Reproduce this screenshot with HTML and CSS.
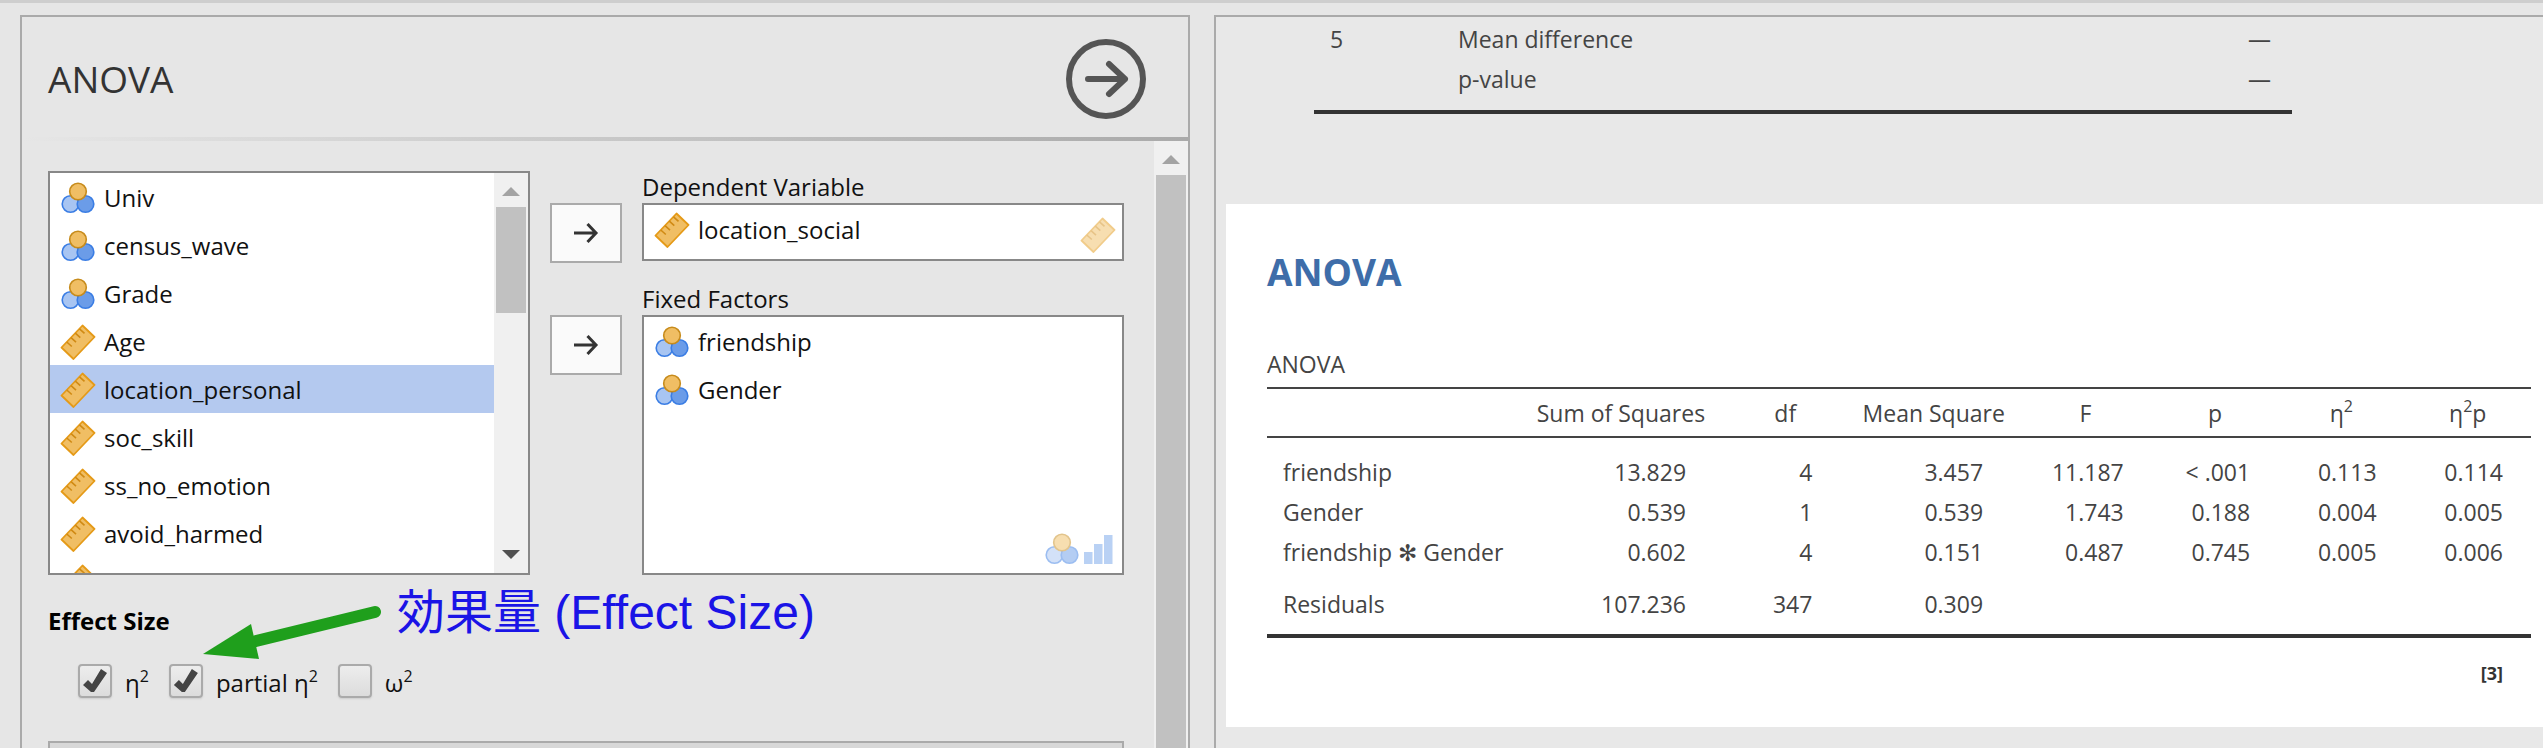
FILE: index.html
```html
<!DOCTYPE html>
<html lang="en">
<head>
<meta charset="utf-8">
<title>ANOVA</title>
<link rel="stylesheet" href="styles.css">
</head>
<body>
<svg class="defs" width="0" height="0" aria-hidden="true">
  <symbol id="nominal" viewBox="0 0 36 36">
    <circle cx="10.500" cy="24" r="8.300" fill="#a8c5f2" stroke="#3a7de4" stroke-width="1.600"/>
    <circle cx="25.500" cy="24" r="8.300" fill="#6b9ce8" stroke="#3a7de4" stroke-width="1.600"/>
    <circle cx="18" cy="11.500" r="8.300" fill="#f0be64" stroke="#c78b1b" stroke-width="1.600"/>
  </symbol>
  <symbol id="continuous" viewBox="0 0 36 36">
    <path d="M22.500 1.500 L34.500 13 L13.500 35 L1.500 23.500 Z" fill="#f0be64" stroke="#e59a17" stroke-width="1.800" stroke-linejoin="round"/>
    <path d="M19.500 4.800 l5 4.500 M15.300 9.200 l5 4.500 M11 13.600 l5 4.500 M6.800 18 l5 4.500" fill="none" stroke="#d08a14" stroke-width="1.600"/>
  </symbol>
  <symbol id="ordinal" viewBox="0 0 30 30">
    <path d="M0 18h8.500v12H0zM10 10h8.500v20H10zM20 1h8.500v29H20z" fill="#76a5ea"/>
  </symbol>
  <symbol id="arrow" viewBox="0 0 28 24">
    <path d="M2 12H24M15.500 3 L24 12 L15.500 21" fill="none" stroke="#333" stroke-width="3"/>
  </symbol>
</svg>
<main class="app">
  <section class="panel options">
    <header class="options-header">
      <h1 class="options-title">ANOVA</h1>
      <button class="close" type="button" aria-label="Close options">
        <svg viewBox="0 0 80 80" width="80" height="80"><circle cx="40" cy="40" r="37" fill="none" stroke="#555" stroke-width="6"/><path d="M22 40H59M43 25 L59 40 L43 55" fill="none" stroke="#555" stroke-width="6" stroke-linecap="round" stroke-linejoin="round"/></svg>
      </button>
    </header>
    <div class="rule"></div>
    <div class="options-body">
      <div class="options-content">
        <div class="variables">
          <div class="box supplier">
            <ul class="list" role="listbox" aria-label="Variables">
              <li class="item" role="option"><svg class="icon"><use href="#nominal"/></svg>Univ</li>
              <li class="item" role="option"><svg class="icon"><use href="#nominal"/></svg>census_wave</li>
              <li class="item" role="option"><svg class="icon"><use href="#nominal"/></svg>Grade</li>
              <li class="item" role="option"><svg class="icon"><use href="#continuous"/></svg>Age</li>
              <li class="item selected" role="option" aria-selected="true"><svg class="icon"><use href="#continuous"/></svg>location_personal</li>
              <li class="item" role="option"><svg class="icon"><use href="#continuous"/></svg>soc_skill</li>
              <li class="item" role="option"><svg class="icon"><use href="#continuous"/></svg>ss_no_emotion</li>
              <li class="item" role="option"><svg class="icon"><use href="#continuous"/></svg>avoid_harmed</li>
              <li class="item" role="option"><svg class="icon"><use href="#continuous"/></svg></li>
            </ul>
            <div class="scrollbar"><span class="up"></span><span class="thumb thumb-short"></span><span class="down"></span></div>
          </div>
          <div class="moves">
            <button class="move" type="button" aria-label="Move to Dependent Variable"><svg width="28" height="24"><use href="#arrow"/></svg></button>
            <button class="move" type="button" aria-label="Move to Fixed Factors"><svg width="28" height="24"><use href="#arrow"/></svg></button>
          </div>
          <div class="targets">
            <h2 class="label">Dependent Variable</h2>
            <div class="box target-single">
              <ul class="list"><li class="item"><svg class="icon"><use href="#continuous"/></svg>location_social</li></ul>
              <div class="permitted"><svg class="icon"><use href="#continuous"/></svg></div>
            </div>
            <h2 class="label label-next">Fixed Factors</h2>
            <div class="box target-multi">
              <ul class="list">
                <li class="item"><svg class="icon"><use href="#nominal"/></svg>friendship</li>
                <li class="item"><svg class="icon"><use href="#nominal"/></svg>Gender</li>
              </ul>
              <div class="permitted"><svg class="icon"><use href="#nominal"/></svg><svg class="icon-bars"><use href="#ordinal"/></svg></div>
            </div>
          </div>
        </div>
        <fieldset class="effect">
          <legend class="effect-title">Effect Size</legend>
          <div class="checks">
            <label class="check"><input type="checkbox" checked><span>η<sup>2</sup></span></label>
            <label class="check"><input type="checkbox" checked><span>partial η<sup>2</sup></span></label>
            <label class="check"><input type="checkbox"><span>ω<sup>2</sup></span></label>
          </div>
        </fieldset>
        <div class="collapse"></div>
      </div>
      <div class="scrollbar"><span class="up"></span><span class="thumb"></span></div>
    </div>
  </section>
  <section class="panel results">
    <table class="previous">
      <colgroup><col class="p-row"><col class="p-stat"><col></colgroup>
      <tbody>
        <tr><td>5</td><td>Mean difference</td><td class="num">—</td></tr>
        <tr><td></td><td>p-value</td><td class="num">—</td></tr>
      </tbody>
    </table>
    <article class="card">
      <h2 class="card-title">ANOVA</h2>
      <table class="anova">
        <caption>ANOVA</caption>
        <colgroup><col class="c-name"><col class="c-sum"><col class="c-std"><col class="c-mean"><col class="c-f"><col class="c-std"><col class="c-std"><col></colgroup>
        <thead>
          <tr><th></th><th>Sum of Squares</th><th>df</th><th>Mean Square</th><th>F</th><th>p</th><th>η<sup>2</sup></th><th>η<sup>2</sup>p</th></tr>
        </thead>
        <tbody>
          <tr class="first"><td>friendship</td><td>13.829</td><td>4</td><td>3.457</td><td>11.187</td><td>&lt;&nbsp;.001</td><td>0.113</td><td>0.114</td></tr>
          <tr><td>Gender</td><td>0.539</td><td>1</td><td>0.539</td><td>1.743</td><td>0.188</td><td>0.004</td><td>0.005</td></tr>
          <tr><td>friendship <span class="times">✻</span> Gender</td><td>0.602</td><td>4</td><td>0.151</td><td>0.487</td><td>0.745</td><td>0.005</td><td>0.006</td></tr>
          <tr class="last"><td>Residuals</td><td>107.236</td><td>347</td><td>0.309</td><td></td><td></td><td></td><td></td></tr>
        </tbody>
      </table>
      <p class="ref">[3]</p>
    </article>
  </section>
</main>
<div class="note">
  <svg class="note-arrow" viewBox="0 0 184 56" width="184" height="56" aria-hidden="true"><path d="M53 36 L172 7" stroke="#1f9f1c" stroke-width="12" stroke-linecap="round"/><path d="M0 49 L48 19 L56 54 Z" fill="#1f9f1c"/></svg>
  <span class="note-text">効果量 (Effect Size)</span>
</div>
</body>
</html>
```
FILE: styles.css
```css
* { box-sizing: border-box; }

html { height: 100%; overflow: hidden; }

body {
  margin: 0;
  height: 100%;
  overflow: hidden;
  background: #e6e6e6;
  color: #111;
  font: 24px/32px "Open Sans", "Noto Sans", "DejaVu Sans", sans-serif;
}

h1, h2, p, ul { margin: 0; padding: 0; font-weight: 400; }
sup { font-size: 16px; line-height: 0; vertical-align: 10px; }
.defs { position: absolute; }

.app {
  display: grid;
  grid-template-columns: 1170fr 1329fr;
  grid-template-rows: minmax(0, 1fr);
  gap: 24px;
  height: 100%;
  padding: 12px 0 0 20px;
  border-top: 3px solid #cecece;
}

.panel { border: 2px solid #aaa; border-bottom: 0; min-width: 0; overflow: hidden; }

/* Options */
.options { display: flex; flex-direction: column; }
.options-header {
  display: flex;
  align-items: center;
  justify-content: space-between;
  flex: none;
  height: 120px;
  padding: 4px 42px 0 26px;
}
.options-title { font-size: 37px; line-height: 48px; color: #333; }
.close { padding: 0; border: 0; background: none; height: 80px; }
.rule { flex: none; height: 4px; background: linear-gradient(to right, #e6e6e6, #aaa); }
.options-body { display: flex; flex: 1; min-height: 0; }
.options-content { display: flex; flex-direction: column; flex: 1; padding: 30px 30px 0 26px; }

.variables { display: grid; grid-template-columns: 1fr 72px 1fr; gap: 20px; flex: none; }
.box { display: flex; border: 2px solid #888; background: #fff; overflow: hidden; }
.supplier { height: 404px; }
.list { flex: 1; list-style: none; }
.item { display: flex; align-items: center; gap: 8px; height: 48px; padding: 2px 0 0 10px; }
.selected { background: #b4c9ef; }
.icon { width: 36px; height: 36px; flex: none; }
.icon-bars { width: 30px; height: 30px; }

.moves { display: flex; flex-direction: column; gap: 52px; padding-top: 32px; }
.move {
  display: flex;
  align-items: center;
  justify-content: center;
  height: 60px;
  padding: 0;
  border: 2px solid #aaa;
  background: #fafafa;
}

.targets { display: flex; flex-direction: column; }
.label { font-size: 24px; line-height: 32px; }
.label-next { margin-top: 22px; }
.target-single { height: 58px; }
.target-multi { flex: 1; }
.permitted { display: flex; align-items: flex-end; gap: 4px; padding: 0 6px 6px 0; opacity: 0.5; }
.target-multi .permitted { align-items: center; align-self: flex-end; padding-right: 8px; }

.scrollbar {
  display: flex;
  flex-direction: column;
  align-items: center;
  flex: none;
  width: 34px;
  background: #f0f0f0;
}
.up, .down { width: 18px; height: 9px; flex: none; margin: 14px 0 11px; background: #a3a3a3; clip-path: polygon(50% 0, 100% 100%, 0 100%); }
.down { margin: 0 0 14px; background: #505050; clip-path: polygon(0 0, 100% 0, 50% 100%); }
.thumb { width: 30px; flex: 1; background: #c1c1c1; }
.thumb-short { flex: 0 0 106px; margin-bottom: auto; }

.effect { flex: none; margin: 29px 0 0; padding: 0 0 0 30px; border: 0; }
.effect-title { margin-left: -30px; padding: 0; font-weight: 700; line-height: 34px; color: #000; }
.checks { display: flex; gap: 20px; margin-top: 26px; }
.check { display: flex; align-items: center; gap: 13px; height: 34px; }
.check span { padding-top: 3px; }
.check input {
  appearance: none;
  width: 34px;
  height: 34px;
  margin: 0;
  border: 2px solid #aaa;
  border-radius: 4px;
  background: linear-gradient(#ededed, #dcdcdc);
  box-shadow: 0 1px 2px #ccc;
}
.check input:checked::after {
  content: "";
  display: block;
  width: 30px;
  height: 30px;
  background: #444;
  clip-path: polygon(3px 19px, 8px 14px, 12px 18px, 21px 3px, 27px 7px, 14px 26px, 11px 26px);
}
.collapse { flex: 1; margin-top: 43px; border: 2px solid #aaa; border-bottom: 0; background: #d8d8d8; }

/* Results */
.results { display: flex; flex-direction: column; padding-left: 10px; border-right: 0; background: #e8e8e8; color: #444; font-size: 23px; }
table { border-spacing: 0; table-layout: fixed; line-height: 40px; }
td, th { padding: 0; font-weight: 400; white-space: nowrap; }

.previous { width: calc(100% - 339px); margin: 2px 0 90px 88px; border-bottom: 4px solid #333; color: #444; }
.previous td { padding-left: 16px; }
.previous tr:last-child td { padding-bottom: 11px; }
.previous .num { padding-right: 21px; text-align: right; }
.p-row { width: 128px; }
.p-stat { width: 320px; }

.card { padding: 44px 12px 42px 41px; background: #fff; }
.card-title { font-size: 37px; line-height: 48px; font-weight: 700; color: #3e6da9; }
.anova { width: 100%; margin-top: 48px; border-bottom: 4px solid #333; color: #444; }
.anova caption { text-align: left; padding-bottom: 3px; }
.anova th { height: 51px; border: solid #444; border-width: 2px 0; line-height: 46px; }
.anova td { padding-right: 36px; text-align: right; }
.anova td:nth-child(n+5) { padding-right: 28px; }
.anova td:first-child { padding: 0 0 0 16px; text-align: left; }
.anova .first td, .anova .first td:first-child { padding-top: 14px; }
.anova .last td, .anova .last td:first-child { padding-top: 12px; padding-bottom: 10px; }
.times { line-height: 0; }
.c-name { width: 20%; }
.c-sum { width: 16%; }
.c-mean { width: 13.5%; }
.c-f { width: 10.5%; }
.c-std { width: 10%; }
.ref { padding-right: 28px; margin-top: 23px; font-size: 18px; line-height: 24px; font-weight: 700; text-align: right; color: #333; }

/* Annotation drawn over the options panel */
.note { position: absolute; left: 203px; top: 581px; display: flex; align-items: flex-start; gap: 10px; pointer-events: none; }
.note-arrow { margin-top: 24px; }
.note-text { font: 48px/64px "Liberation Sans", "Noto Sans CJK JP", sans-serif; color: #1a14e6; white-space: nowrap; }
```
